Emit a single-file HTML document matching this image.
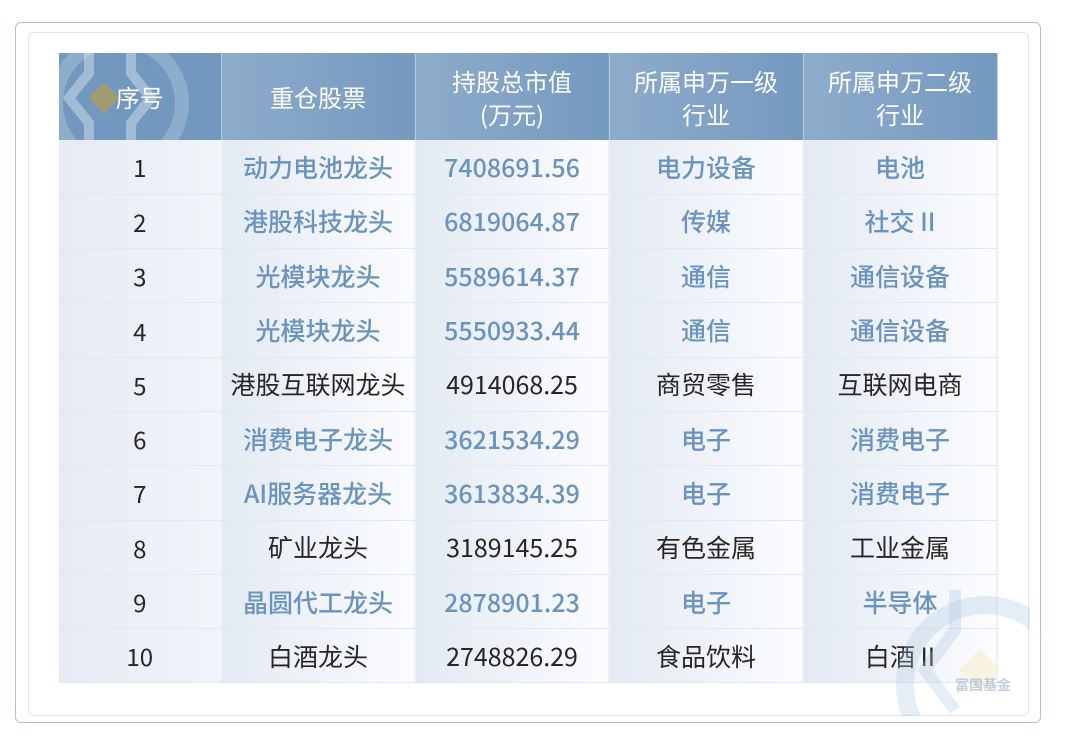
<!DOCTYPE html>
<html><head><meta charset="utf-8"><style>
*{margin:0;padding:0;box-sizing:border-box}
body{width:1080px;height:755px;background:#fff;position:relative;overflow:hidden;font-family:"Noto Sans CJK SC","Liberation Sans",sans-serif}
.outer{position:absolute;left:15px;top:22px;width:1026px;height:701px;border:1px solid #a9c1e2;border-radius:6px}
.inner{position:absolute;left:28px;top:32px;width:1001px;height:684px;border:1px solid #dde6f1;border-radius:6px}
table{position:absolute;left:59px;top:53px;border-collapse:collapse;table-layout:fixed;width:938px}
th{height:87px;color:#fff;font-weight:normal;font-size:24px;line-height:33px;background:linear-gradient(90deg,#8eaccb,#7499c0);border-right:1px solid #b4c8dd}
td{height:54.3px;text-align:center;font-size:25px;color:#2a2424;background:linear-gradient(90deg,#e3eaf3,#fbfcfe);border-bottom:1px solid #e0e8f1;border-right:1px solid #eef2f7}
td.n{background:linear-gradient(90deg,#e6ecf4,#f1f4f9);font-size:24px}
tr.b td{color:#6b93bf;font-weight:500}
tr.b td.n{color:#2a2424;font-weight:normal}
</style></head><body>
<div class="outer"></div><div class="inner"></div>
<table>
<colgroup><col style="width:162px"><col style="width:194px"><col style="width:194px"><col style="width:194px"><col style="width:194px"></colgroup>
<tr><th style="background:#7298bf;position:relative;overflow:hidden"><svg style="position:absolute;left:0;top:0" width="162" height="87"><circle cx="60" cy="50" r="63" fill="none" stroke="rgba(255,255,255,0.2)" stroke-width="14"/><path d="M30 0 V20 L10 45 L30 70 V87" fill="none" stroke="rgba(255,255,255,0.35)" stroke-width="10"/><path d="M72 0 V20 L92 45 L72 70 V87" fill="none" stroke="rgba(255,255,255,0.35)" stroke-width="10"/><rect x="34" y="34" width="22" height="22" transform="rotate(45 45 45)" fill="#a49a72"/></svg><span style="position:relative">序号</span></th><th>重仓股票</th><th>持股总市值<br>(万元)</th><th>所属申万一级<br>行业</th><th>所属申万二级<br>行业</th></tr>
<tr class="b"><td class="n">1</td><td>动力电池龙头</td><td>7408691.56</td><td>电力设备</td><td>电池</td></tr>
<tr class="b"><td class="n">2</td><td>港股科技龙头</td><td>6819064.87</td><td>传媒</td><td>社交 II</td></tr>
<tr class="b"><td class="n">3</td><td>光模块龙头</td><td>5589614.37</td><td>通信</td><td>通信设备</td></tr>
<tr class="b"><td class="n">4</td><td>光模块龙头</td><td>5550933.44</td><td>通信</td><td>通信设备</td></tr>
<tr><td class="n">5</td><td>港股互联网龙头</td><td>4914068.25</td><td>商贸零售</td><td>互联网电商</td></tr>
<tr class="b"><td class="n">6</td><td>消费电子龙头</td><td>3621534.29</td><td>电子</td><td>消费电子</td></tr>
<tr class="b"><td class="n">7</td><td>AI服务器龙头</td><td>3613834.39</td><td>电子</td><td>消费电子</td></tr>
<tr><td class="n">8</td><td>矿业龙头</td><td>3189145.25</td><td>有色金属</td><td>工业金属</td></tr>
<tr class="b"><td class="n">9</td><td>晶圆代工龙头</td><td>2878901.23</td><td>电子</td><td>半导体</td></tr>
<tr><td class="n">10</td><td>白酒龙头</td><td>2748826.29</td><td>食品饮料</td><td>白酒 II</td></tr>
</table>
<svg style="position:absolute;left:890px;top:590px;width:140px;height:126px;overflow:hidden" width="140" height="126"><circle cx="95" cy="95" r="80" fill="none" stroke="rgba(170,195,225,0.3)" stroke-width="18"/><path d="M65 0 V40 L35 80 L65 120" fill="none" stroke="rgba(170,195,225,0.3)" stroke-width="12"/><rect x="75" y="65" width="30" height="30" transform="rotate(45 90 80)" fill="rgba(250,225,170,0.35)"/><text x="65" y="100" font-size="14" fill="rgba(150,175,210,0.6)" font-family="Noto Sans CJK SC,sans-serif" font-weight="bold">富国基金</text></svg>
</body></html>
